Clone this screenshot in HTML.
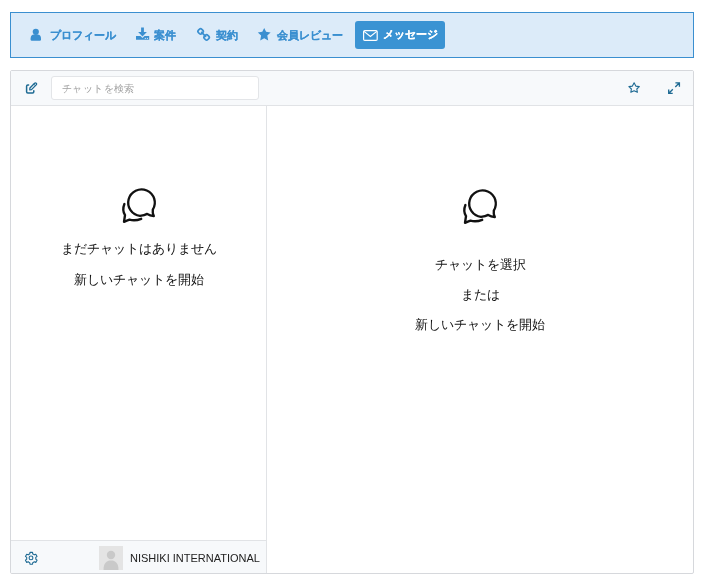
<!DOCTYPE html>
<html><head><meta charset="utf-8">
<style>
*{box-sizing:border-box;margin:0;padding:0}
html,body{width:702px;height:585px;background:#fff;overflow:hidden;-webkit-font-smoothing:antialiased;font-family:"Liberation Sans",sans-serif;color:#222}
.abs{position:absolute}
.nav{position:absolute;left:10px;top:12px;width:684px;height:46px;background:#dcebf9;border:1px solid #3a8fd0}
.t{position:absolute;white-space:nowrap;line-height:1;will-change:transform}
.nt{font-size:11px;font-weight:bold;color:#3a8fd0;-webkit-text-stroke:0.1px currentColor}
.active{position:absolute;left:355px;top:21px;width:90px;height:28px;background:#3a93d3;border-radius:3px}
.panel{position:absolute;left:10px;top:70px;width:684px;height:504px;border:1px solid #d6d8dc;border-radius:2px;background:#fff}
.head{position:absolute;left:11px;top:71px;width:682px;height:35px;background:#f7f9fb;border-bottom:1px solid #e1e3e6}
.search{position:absolute;left:51px;top:76px;width:208px;height:24px;background:#fff;border:1px solid #e3e5e8;border-radius:3px}
.vdiv{position:absolute;left:266px;top:106px;width:1px;height:467px;background:#e1e3e6}
.foot{position:absolute;left:11px;top:540px;width:255px;height:33px;border-top:1px solid #e1e3e6;background:#f7f9fb;border-bottom-left-radius:1px}
.msg{font-size:13px;color:#111}
</style></head><body>
<div class="nav"></div>
<!-- user icon -->
<svg class="abs" style="left:0;top:0" width="702" height="60" viewBox="0 0 702 60">
  <g fill="#3a8fd0">
    <circle cx="35.8" cy="31.8" r="3.1"/>
    <path d="M30.6 38.6 C30.6 36 32 34.6 34 34.6 L37.6 34.6 C39.6 34.6 41 36 41 38.6 L41 39.6 Q41 40.8 39.8 40.8 L31.8 40.8 Q30.6 40.8 30.6 39.6 Z"/>
    <!-- download -->
    <path d="M141.1 27.6 H143.9 V32.1 H146.9 L142.5 36.4 L138.1 32.1 H141.1 Z"/>
    <path d="M136 36 H140.5 L142.5 38 L144.5 36 H149.2 V39.8 H136 Z"/>
    <!-- star -->
    <path d="M264.2 27.9 L266.1 31.8 L270.6 32.4 L267.3 35.6 L268.2 40.4 L264.2 38.2 L260.2 40.4 L261.1 35.6 L257.8 32.4 L262.3 31.8 Z"/>
  </g>
  <circle cx="147.4" cy="38.3" r="0.65" fill="#dcebf9"/><circle cx="145.3" cy="38.3" r="0.65" fill="#dcebf9"/>
  <!-- link -->
  <g fill="none" stroke="#3a8fd0" stroke-width="1.7" stroke-linecap="round">
    <rect x="198.2" y="29" width="4.8" height="4.8" rx="1.8" transform="rotate(45 200.6 31.4)"/>
    <rect x="204.2" y="35" width="4.8" height="4.8" rx="1.8" transform="rotate(45 206.6 37.4)"/>
    <path d="M201.6 32.4 L205.6 36.4"/>
  </g>
</svg>
<div class="t nt" style="left:50px;top:30px">プロフィール</div>
<div class="t nt" style="left:154px;top:30px">案件</div>
<div class="t nt" style="left:216px;top:30px">契約</div>
<div class="t nt" style="left:277px;top:30px">会員レビュー</div>
<div class="active"></div>
<svg class="abs" style="left:0;top:0" width="460" height="60" viewBox="0 0 460 60">
  <rect x="363.6" y="30.6" width="13.6" height="9.8" rx="1.2" fill="none" stroke="#fff" stroke-width="1.2"/>
  <path d="M364 31.4 L370.4 36.4 L376.8 31.4" fill="none" stroke="#fff" stroke-width="1.2"/>
</svg>
<div class="t nt" style="left:383px;top:29px;color:#fff">メッセージ</div>

<div class="panel"></div>
<div class="head"></div>
<svg class="abs" style="left:0;top:60px" width="702" height="50" viewBox="0 60 702 50">
  <g fill="none" stroke="#1e6a93" stroke-linecap="round" stroke-linejoin="round">
    <path d="M28.6 85 H27.8 Q26.6 85 26.6 86.2 V91.7 Q26.6 92.9 27.8 92.9 H32.6 Q33.8 92.9 33.8 91.7 V90.8" stroke-width="1.5"/>
    <path d="M29.8 89.8 L29.9 88 L34.6 83.3 Q35.4 82.5 36.2 83.3 Q37 84.1 36.2 84.9 L31.5 89.6 Z" stroke-width="1.3"/>
    <path d="M33.8 84.1 L35.4 85.7" stroke-width="0.9"/>
    <path d="M634.1 82.8 L635.8 86.1 L639.3 86.6 L636.8 89 L637.4 92.3 L634.1 90.7 L630.8 92.3 L631.4 89 L628.9 86.6 L632.4 86.1 Z" stroke-width="1.1"/>
  </g>
  <g fill="none" stroke="#1e6a93" stroke-width="1.35" stroke-linecap="butt">
    <path d="M675.4 82.8 H679.4 V86.8 M679.4 82.8 L675.3 86.9"/>
    <path d="M668.7 89.4 V93.4 H672.7 M668.7 93.4 L672.8 89.3"/>
  </g>
</svg>
<div class="search"></div>
<div class="t" style="left:62px;top:84px;font-size:10.2px;letter-spacing:0.4px;color:#a0a0a0">チャットを検索</div>

<div class="vdiv"></div>
<div class="foot"></div>

<!-- chat icons -->
<svg class="abs" style="left:118px;top:184px" width="44" height="44" viewBox="0 0 44 44">
  <g fill="none" stroke="#111" stroke-width="2.35" stroke-linecap="round" stroke-linejoin="round">
    <path d="M34.8 25.7 A13.3 13.3 0 1 0 22 31.9 Q26.5 31.4 29.2 29.9 Q32 31.5 35.8 32 Q34.3 28.8 34.8 25.7 Z"/>
    <path d="M6.4 20 Q3.9 26 7 31.2 L6 37.8 Q9 36.5 11.5 35.6 Q17 37.2 23.2 34.8"/>
  </g>
</svg>
<svg class="abs" style="left:459px;top:185px" width="44" height="44" viewBox="0 0 44 44">
  <g fill="none" stroke="#111" stroke-width="2.35" stroke-linecap="round" stroke-linejoin="round">
    <path d="M34.8 25.7 A13.3 13.3 0 1 0 22 31.9 Q26.5 31.4 29.2 29.9 Q32 31.5 35.8 32 Q34.3 28.8 34.8 25.7 Z"/>
    <path d="M6.4 20 Q3.9 26 7 31.2 L6 37.8 Q9 36.5 11.5 35.6 Q17 37.2 23.2 34.8"/>
  </g>
</svg>

<div class="t msg" style="left:11px;width:255px;top:242px;text-align:center">まだチャットはありません</div>
<div class="t msg" style="left:11px;width:255px;top:273px;text-align:center">新しいチャットを開始</div>
<div class="t msg" style="left:266px;width:428px;top:258px;text-align:center">チャットを選択</div>
<div class="t msg" style="left:266px;width:428px;top:288px;text-align:center">または</div>
<div class="t msg" style="left:266px;width:428px;top:318px;text-align:center">新しいチャットを開始</div>

<!-- footer -->
<svg class="abs" style="left:20px;top:547px" width="22" height="22" viewBox="-11.25 -11.3 22 22">
  <path d="M-2.30 -3.98 L-1.50 -4.35 L-1.27 -5.97 L1.27 -5.97 L1.50 -4.35 L2.30 -3.98 L3.02 -3.47 L4.53 -4.08 L5.80 -1.89 L4.52 -0.88 L4.60 0.00 L4.52 0.88 L5.80 1.89 L4.53 4.08 L3.02 3.47 L2.30 3.98 L1.50 4.35 L1.27 5.97 L-1.27 5.97 L-1.50 4.35 L-2.30 3.98 L-3.02 3.47 L-4.53 4.08 L-5.80 1.89 L-4.52 0.88 L-4.60 -0.00 L-4.52 -0.88 L-5.80 -1.89 L-4.53 -4.08 L-3.02 -3.47 Z" fill="none" stroke="#1e6a93" stroke-width="1.1" stroke-linejoin="round"/>
  <circle cx="-0.25" cy="-0.4" r="1.9" fill="none" stroke="#1e6a93" stroke-width="1.1"/>
</svg>
<div class="abs" style="left:99px;top:546px;width:24px;height:24px;background:#e4e4e4;overflow:hidden">
  <svg width="24" height="24" viewBox="0 0 24 24"><circle cx="12" cy="9" r="4.2" fill="#c9c9c9"/><path d="M4.5 24 C4.5 17 7.5 14.5 12 14.5 C16.5 14.5 19.5 17 19.5 24 Z" fill="#c9c9c9"/></svg>
</div>
<div class="t" style="left:130px;top:553px;font-size:11px;color:#222">NISHIKI INTERNATIONAL</div>
</body></html>
